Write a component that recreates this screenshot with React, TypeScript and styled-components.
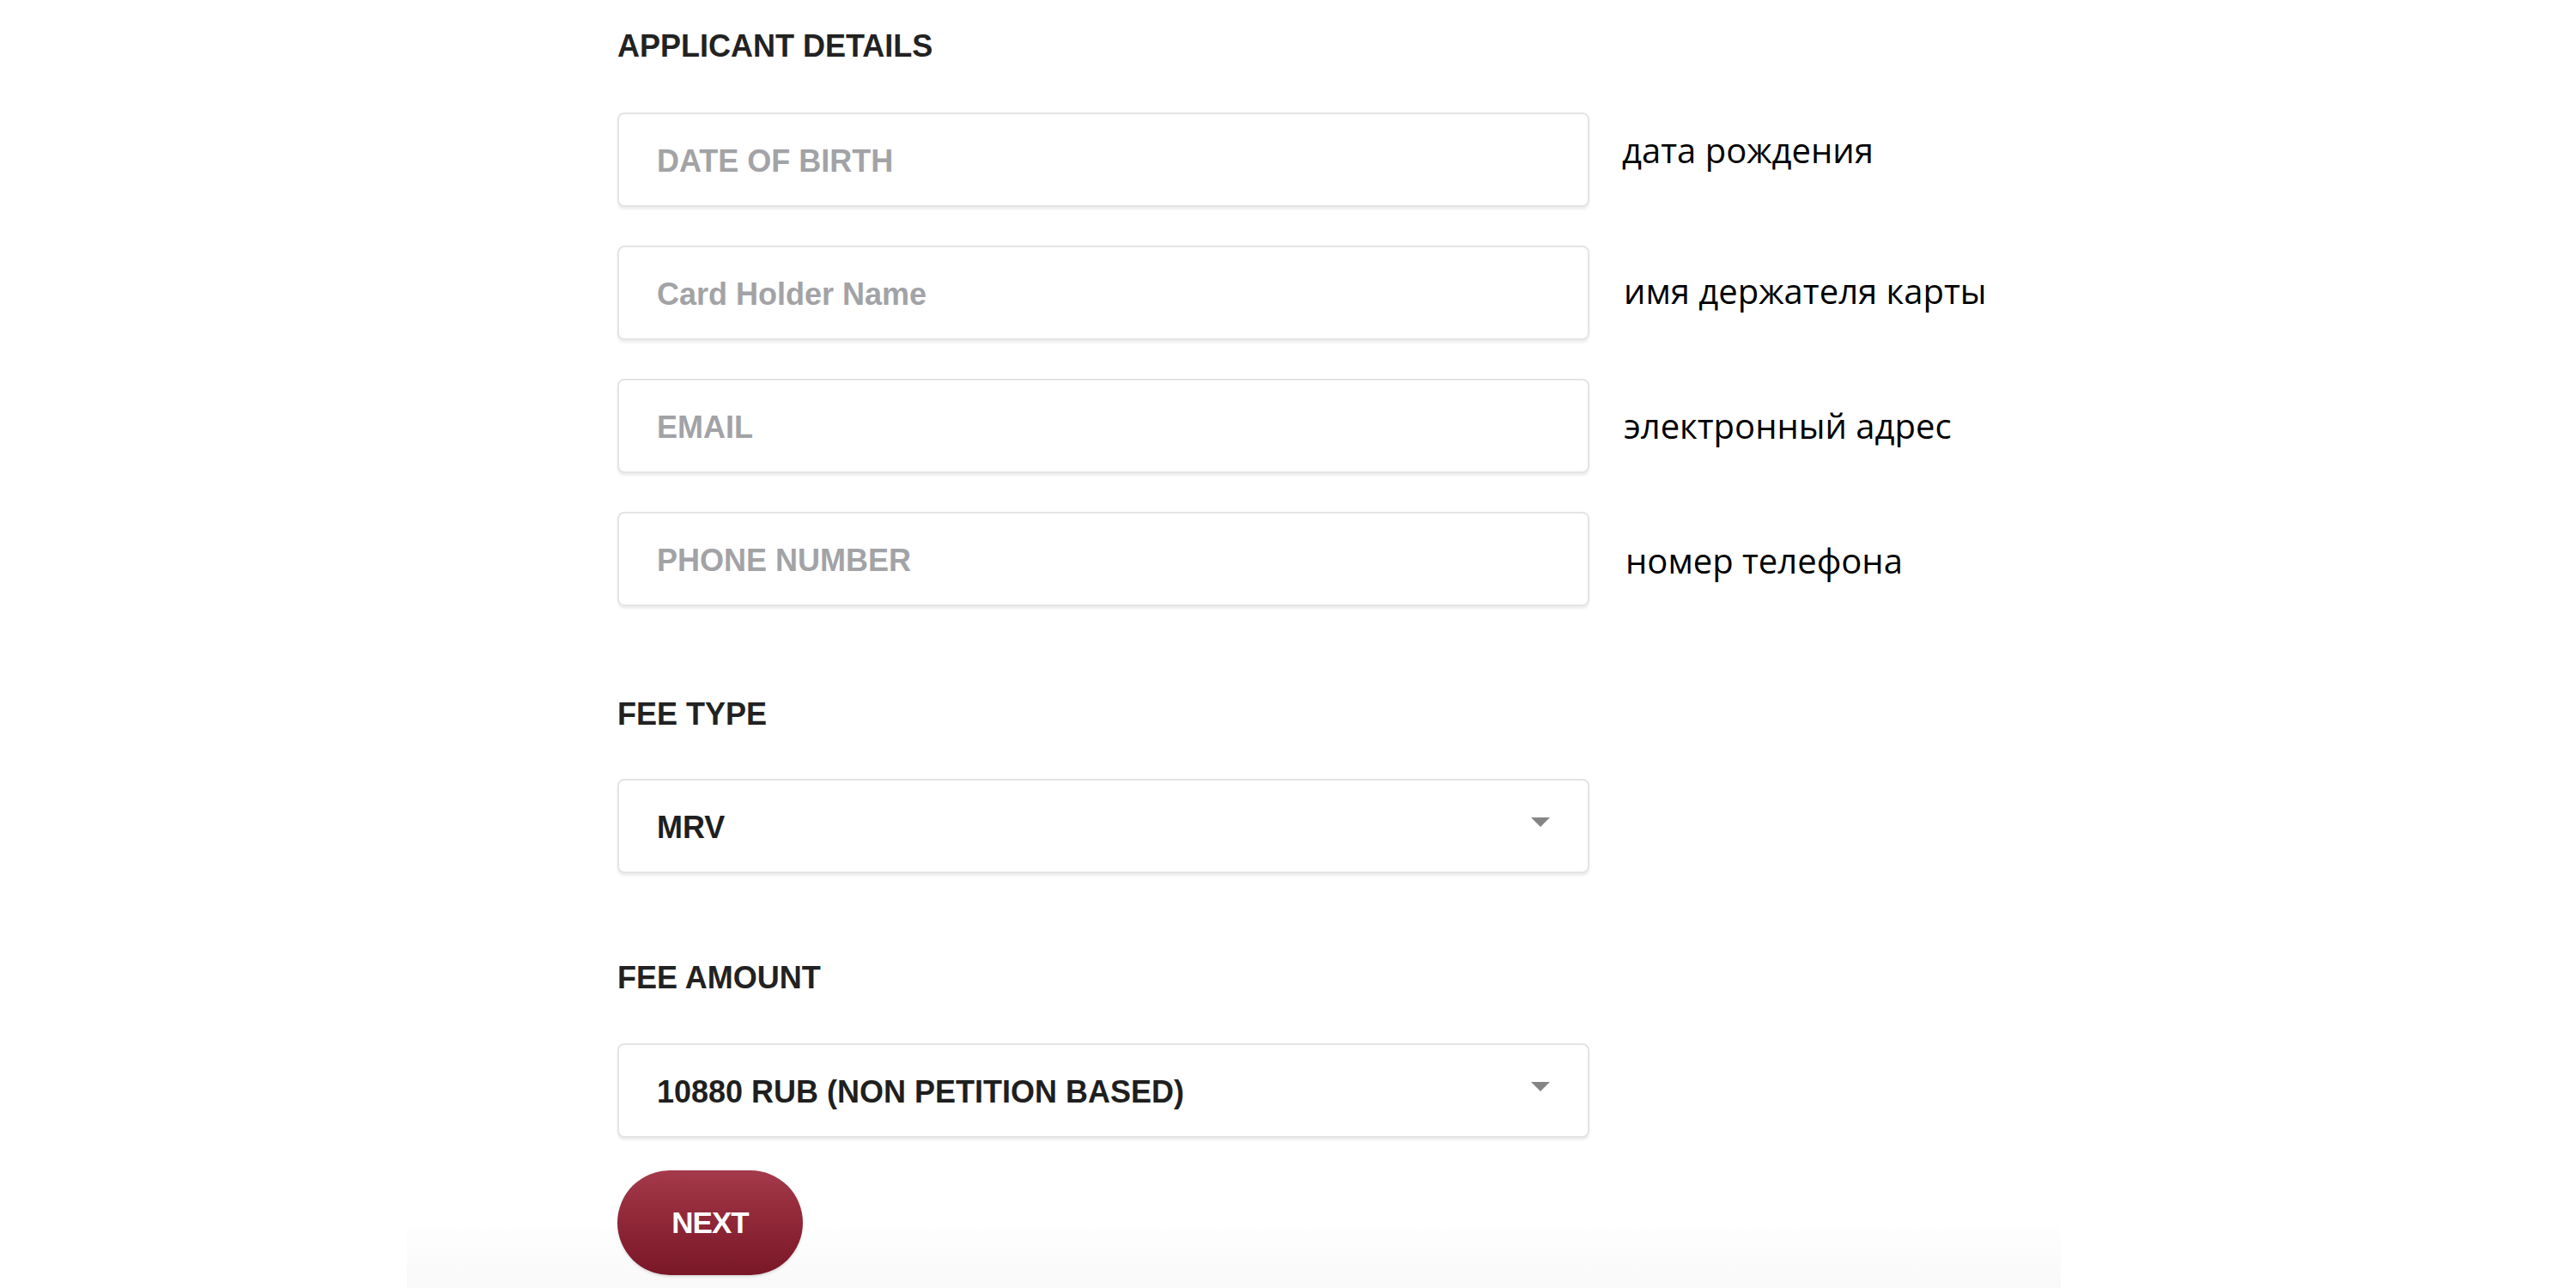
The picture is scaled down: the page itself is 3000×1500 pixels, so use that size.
import React from "react";
import styled, { createGlobalStyle } from "styled-components";

const Global = createGlobalStyle`
  html, body { margin: 0; padding: 0; background: #ffffff; }
  body { font-family: "Liberation Sans", Arial, sans-serif; }
  * { box-sizing: border-box; }
`;

const Page = styled.div`
  width: 3000px;
  height: 1500px;
  overflow: hidden;
  background: #ffffff;
`;

const Sheet = styled.div`
  margin-left: 474px;
  width: 1926px;
  height: 1500px;
  padding: 36px 0 0 245px;
  background: linear-gradient(
    to bottom,
    #ffffff 0,
    #ffffff 1425px,
    #fdfdfd 1440px,
    #f9f9f9 1500px
  );
  display: flex;
  flex-direction: column;
  align-items: flex-start;
`;

const SectionTitle = styled.h2<{ $gapTop?: number; $gapBottom: number }>`
  margin: ${(p) => p.$gapTop ?? 0}px 0 ${(p) => p.$gapBottom}px 0;
  font-family: "Liberation Sans", Arial, sans-serif;
  font-weight: 700;
  font-size: 36px;
  line-height: 36px;
  color: #222222;
  letter-spacing: 0;
`;

const Fields = styled.div`
  display: flex;
  flex-direction: column;
  gap: 45px;
`;

const Row = styled.div`
  display: flex;
  align-items: center;
  gap: 38px;
`;

const boxStyles = `
  flex-shrink: 0;
  width: 1132px;
  height: 110px;
  border: 2px solid #e4e4e4;
  border-radius: 8px;
  background: #ffffff;
  box-shadow: 0 3px 3px rgba(0, 0, 0, 0.07);
  font-family: "Liberation Sans", Arial, sans-serif;
  font-weight: 700;
  font-size: 36px;
`;

const TextInput = styled.input`
  ${boxStyles}
  padding: 4px 0 0 44px;
  color: #262626;
  outline: none;
  &::placeholder {
    color: #a2a3a6;
    opacity: 1;
  }
`;

const Hint = styled.span<{ $shift: number; $indent: number }>`
  font-family: "Open Sans", "Noto Sans", sans-serif;
  font-size: 40px;
  color: #000000;
  line-height: 1;
  white-space: nowrap;
  margin-top: ${(p) => p.$shift}px;
  margin-left: ${(p) => p.$indent}px;
`;

const SelectBox = styled.div`
  ${boxStyles}
  display: flex;
  align-items: center;
  justify-content: space-between;
  padding: 4px 44px 0 44px;
  color: #1f1f1f;
`;

const Arrow = styled.svg`
  width: 22px;
  height: 11px;
  margin-top: -14px;
  flex: 0 0 auto;
`;

const NextButton = styled.button`
  margin-top: 38px;
  width: 216px;
  height: 122px;
  border: none;
  border-radius: 61px;
  background: linear-gradient(to bottom, #a43a4b 0%, #8c2535 55%, #7a1828 100%);
  box-shadow: 0 2px 3px rgba(0, 0, 0, 0.12);
  color: #ffffff;
  font-family: "Liberation Sans", Arial, sans-serif;
  font-weight: 700;
  font-size: 35px;
  letter-spacing: -1px;
  padding: 0;
  cursor: pointer;
`;

const fields = [
  { placeholder: "DATE OF BIRTH", hint: "дата рождения", shift: -22, indent: 0 },
  { placeholder: "Card Holder Name", hint: "имя держателя карты", shift: -4, indent: 2 },
  { placeholder: "EMAIL", hint: "электронный адрес", shift: 0, indent: 2 },
  { placeholder: "PHONE NUMBER", hint: "номер телефона", shift: 4, indent: 4 },
];

const Caret = () => (
  <Arrow viewBox="0 0 22 11">
    <path d="M0 0 H22 L11 11 Z" fill="#858585" />
  </Arrow>
);

export default function App() {
  return (
    <Page>
      <Global />
      <Sheet>
        <SectionTitle $gapBottom={59}>APPLICANT DETAILS</SectionTitle>
        <Fields>
          {fields.map((f) => (
            <Row key={f.placeholder}>
              <TextInput placeholder={f.placeholder} readOnly />
              <Hint $shift={f.shift} $indent={f.indent}>
                {f.hint}
              </Hint>
            </Row>
          ))}
        </Fields>

        <SectionTitle $gapTop={108} $gapBottom={57}>
          FEE TYPE
        </SectionTitle>
        <SelectBox>
          <span>MRV</span>
          <Caret />
        </SelectBox>

        <SectionTitle $gapTop={104} $gapBottom={58}>
          FEE AMOUNT
        </SectionTitle>
        <SelectBox>
          <span>10880 RUB (NON PETITION BASED)</span>
          <Caret />
        </SelectBox>

        <NextButton>NEXT</NextButton>
      </Sheet>
    </Page>
  );
}
